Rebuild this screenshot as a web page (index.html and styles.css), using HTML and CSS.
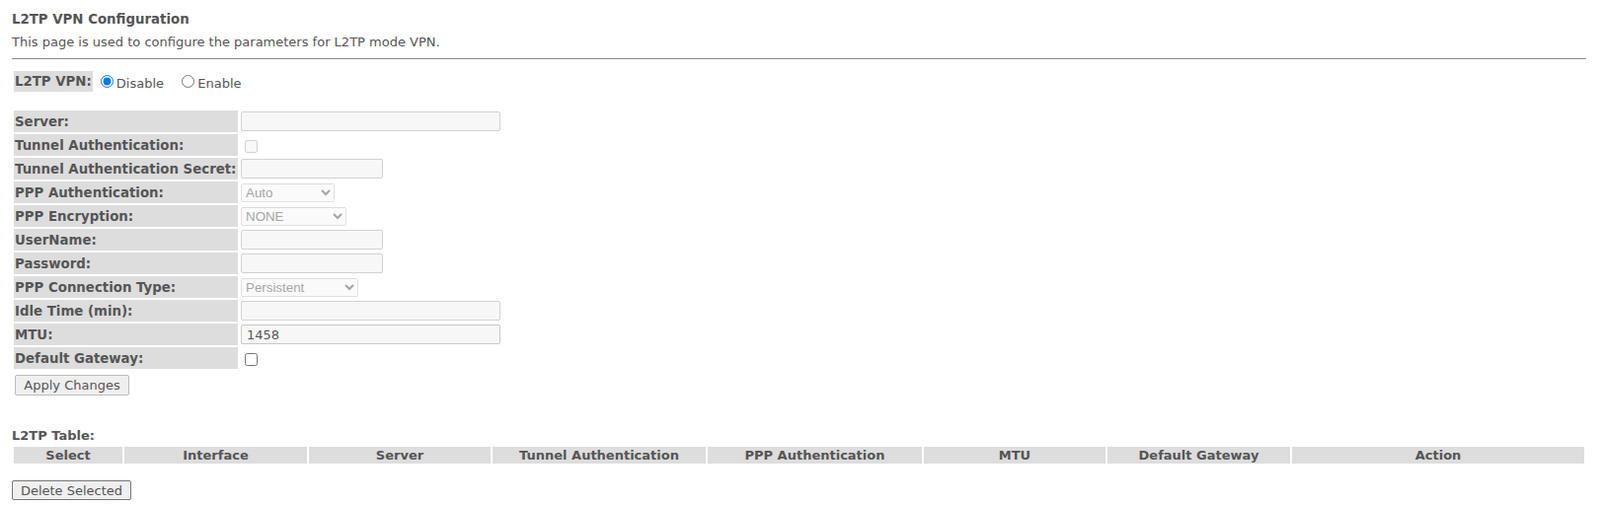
FILE: index.html
```html
<!DOCTYPE html>
<html>
<head>
<meta charset="utf-8">
<title>L2TP VPN Configuration</title>
<link rel="stylesheet" href="styles.css">
</head>
<body>
<div class="page">
  <h2 class="title">L2TP VPN Configuration</h2>
  <p class="desc">This page is used to configure the parameters for L2TP mode VPN.</p>
  <hr class="rule">

  <table class="onoff">
    <tr>
      <th>L2TP VPN:</th>
      <td>
        <label class="opt"><input type="radio" name="l2tpen" checked>Disable</label>
        <label class="opt"><input type="radio" name="l2tpen">Enable</label>
      </td>
    </tr>
  </table>

  <table class="form">
    <tr><th>Server:</th><td><input class="txt wide" type="text" disabled></td></tr>
    <tr><th>Tunnel Authentication:</th><td><input class="chk" type="checkbox" disabled></td></tr>
    <tr><th>Tunnel Authentication Secret:</th><td><input class="txt short" type="text" disabled></td></tr>
    <tr><th>PPP Authentication:</th><td><select class="sel s-auth" disabled><option>Auto</option></select></td></tr>
    <tr><th>PPP Encryption:</th><td><select class="sel s-enc" disabled><option>NONE</option></select></td></tr>
    <tr><th>UserName:</th><td><input class="txt short" type="text" disabled></td></tr>
    <tr><th>Password:</th><td><input class="txt short" type="password" disabled></td></tr>
    <tr><th>PPP Connection Type:</th><td><select class="sel s-conn" disabled><option>Persistent</option></select></td></tr>
    <tr><th>Idle Time (min):</th><td><input class="txt wide" type="text" disabled></td></tr>
    <tr><th>MTU:</th><td><input class="txt wide live" type="text" value="1458"></td></tr>
    <tr><th>Default Gateway:</th><td><input class="chk" type="checkbox"></td></tr>
    <tr class="btnrow"><td colspan="2"><button class="btn apply" type="button">Apply Changes</button></td></tr>
  </table>

  <div class="tbl-title">L2TP Table:</div>
  <table class="list">
    <tr>
      <th class="c-sel">Select</th>
      <th class="c-if">Interface</th>
      <th class="c-srv">Server</th>
      <th class="c-ta">Tunnel Authentication</th>
      <th class="c-pa">PPP Authentication</th>
      <th class="c-mtu">MTU</th>
      <th class="c-gw">Default Gateway</th>
      <th class="c-act">Action</th>
    </tr>
  </table>
  <button class="btn del" type="button">Delete Selected</button>
</div>
</body>
</html>
```

FILE: styles.css
```css
html, body {
  margin: 0;
  padding: 0;
  background: #ffffff;
}

body {
  font-family: "DejaVu Sans", Verdana, sans-serif;
  font-size: 13px;
  color: #555555;
}

.page {
  padding: 0 14px 0 12px;
}

.title {
  margin: 0;
  padding-top: 12px;
  font-size: 13.33px;
  line-height: 15px;
  font-weight: bold;
}

.desc {
  margin: 8px 0 0;
  font-size: 13px;
  line-height: 15px;
}

.rule {
  margin: 9px 0 0;
  height: 0;
  border: 0;
  border-top: 1px solid #8a8a8a;
}

table {
  border-collapse: separate;
  border-spacing: 2px;
  font-size: 13px;
}

th {
  background: #dddddd;
  font-weight: bold;
  text-align: left;
  padding: 1px 1px;
  white-space: nowrap;
}

td {
  padding: 1px;
}

.onoff {
  margin-top: 10px;
}

.onoff th,
.form th {
  font-size: 13.33px;
}

.onoff th {
  height: 21px;
  box-sizing: border-box;
}

.opt input {
  margin: 3px 3px 0 5px;
}

.opt + .opt {
  margin-left: 9px;
}

.form {
  margin-top: 15px;
}

.form th {
  width: 227px;
  box-sizing: border-box;
  height: 22px;
}

.form td {
  height: 22px;
  box-sizing: border-box;
}

.txt {
  box-sizing: border-box;
  height: 20px;
  margin: 0;
  padding: 1px 5px;
  border: 1px solid #d2d2d2;
  border-radius: 2px;
  background: #f7f7f7;
  font-family: "DejaVu Sans", Verdana, sans-serif;
  font-size: 13px;
  color: #555555;
  vertical-align: middle;
}

.txt.live {
  border-color: #c8c8c8;
}

.wide {
  width: 263px;
}

.short {
  width: 144px;
}

.chk {
  margin: 0 0 0 4px;
  width: 13px;
  height: 13px;
  vertical-align: middle;
}

.sel {
  box-sizing: border-box;
  height: 19px;
  margin: 0;
  font-family: "Liberation Sans", Arial, sans-serif;
  font-size: 13.33px;
  vertical-align: middle;
}

.s-auth { width: 95px; }
.s-enc { width: 107px; }
.s-conn { width: 119px; }

.btnrow td {
  height: auto;
  padding-top: 4px;
}

.btn {
  box-sizing: border-box;
  margin: 0;
  font-family: "DejaVu Sans", Verdana, sans-serif;
  font-size: 13px;
  color: #555555;
  background: #efefef;
  border-radius: 2px;
  line-height: 15px;
}

.apply {
  width: 116px;
  height: 21px;
  padding: 2px 0;
  border: 1px solid #bdbdbd;
}

.tbl-title {
  margin-top: 30px;
  font-weight: bold;
  line-height: 15px;
}

.list {
  width: 100%;
  margin-top: 2px;
}

.list th {
  text-align: center;
  padding: 1px;
  height: 17px;
  box-sizing: border-box;
}

.c-sel { width: 110px; }
.c-if { width: 185px; }
.c-srv { width: 184px; }
.c-ta { width: 216px; }
.c-pa { width: 217px; }
.c-mtu { width: 184px; }
.c-gw { width: 185px; }

.del {
  display: block;
  margin-top: 15px;
  width: 121px;
  height: 20px;
  padding: 1px 0;
  border: 1px solid #767676;
}
```
